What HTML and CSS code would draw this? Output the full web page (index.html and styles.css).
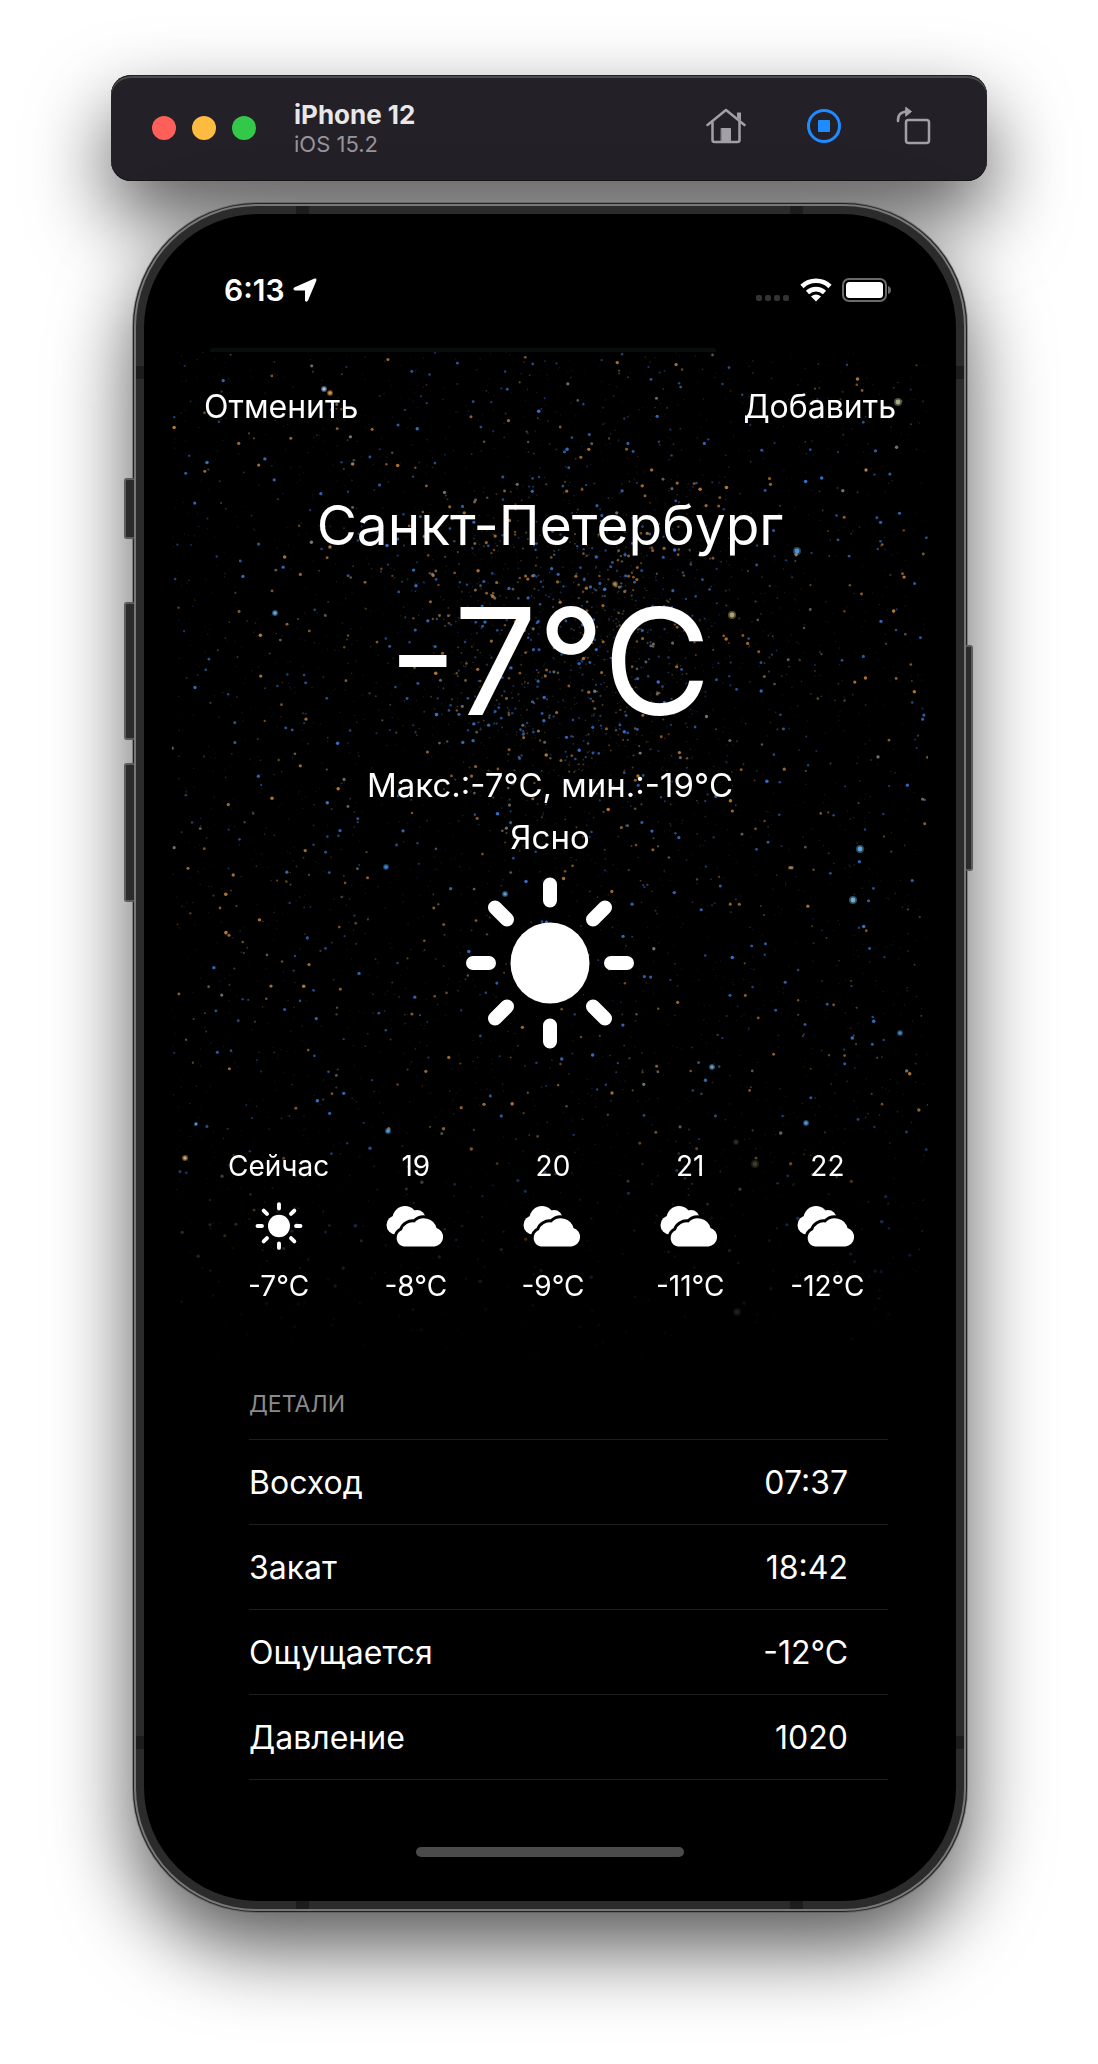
FILE: index.html
```html
<!DOCTYPE html>
<html lang="ru">
<head>
<meta charset="utf-8">
<meta name="viewport" content="width=device-width, initial-scale=1">
<title>Погода — Санкт-Петербург</title>
<link rel="stylesheet" href="styles.css">
</head>
<body>
<svg class="defs" aria-hidden="true">
  <symbol id="sun" viewBox="0 0 168 172">
    <ellipse cx="84" cy="86" rx="39.500" ry="40.500" fill="currentColor"/>
    <g stroke="currentColor" stroke-width="14" stroke-linecap="round">
      <path d="M84 7.500v16M84 148.500v16M7 86h16M145 86h16M29 30.500l12 12M139 30.500l-12 12M29 141.500l12-12M139 141.500l-12-12"/>
    </g>
  </symbol>
  <symbol id="clouds" viewBox="12 14 60 42">
    <g fill="currentColor">
      <circle cx="31" cy="27.500" r="12.500"/>
      <circle cx="22" cy="34" r="9.500"/>
      <circle cx="43" cy="27.500" r="8.500"/>
      <path d="M20 30h20v13H20z"/>
    </g>
    <path d="M30 55.500a8 8.500 0 0 1-2-16.500a11 10.500 0 0 1 12.500-7.500a13 13 0 0 1 22 5.500a9.500 9.500 0 0 1-2 18.500z" fill="currentColor" stroke="#000" stroke-width="6"/>
    <path d="M30 55.500a8 8.500 0 0 1-2-16.500a11 10.500 0 0 1 12.500-7.500a13 13 0 0 1 22 5.500a9.500 9.500 0 0 1-2 18.500z" fill="currentColor"/>
  </symbol>
</svg>

<main class="simulator">
  <header class="toolbar">
    <div class="lights">
      <button class="light light-close" aria-label="Close"></button>
      <button class="light light-minimize" aria-label="Minimize"></button>
      <button class="light light-zoom" aria-label="Zoom"></button>
    </div>
    <div class="device">
      <strong class="device-name">iPhone 12</strong>
      <span class="device-os">iOS 15.2</span>
    </div>
    <div class="actions">
      <button class="action action-home" aria-label="Home">
        <svg width="40" height="36" viewBox="0 0 40 36" fill="none" stroke="currentColor" stroke-width="2.500" stroke-linecap="round" stroke-linejoin="round">
          <path d="M1.500 17L20 2l18.500 15M6.500 14v18q0 2 2 2h23q2 0 2-2V14"/>
          <path d="M31 4.500h4v8l-4-3z" fill="currentColor" stroke="none"/>
          <path d="M15.500 20.500h9V34h-9z" fill="currentColor" stroke-width="1"/>
        </svg>
      </button>
      <button class="action action-active" aria-label="Screenshot">
        <svg width="36" height="36" viewBox="0 0 36 36" fill="none" stroke="currentColor" stroke-width="3">
          <circle cx="18" cy="18" r="15.500"/>
          <rect x="12" y="12" width="12" height="12" rx="1" fill="currentColor" stroke="none"/>
        </svg>
      </button>
      <button class="action" aria-label="Rotate">
        <svg width="36" height="40" viewBox="0 0 36 40" fill="none" stroke="currentColor" stroke-width="2.500" stroke-linecap="round" stroke-linejoin="round">
          <rect x="10" y="14" width="23" height="23" rx="2.500"/>
          <path d="M2 15q-.500-9 9-9.500"/>
          <path d="M10 1.500l5.500 4-5.500 4.500z" fill="currentColor" stroke-width="1"/>
        </svg>
      </button>
    </div>
  </header>

  <div class="phone">
    <i class="side side-mute"></i><i class="side side-up"></i><i class="side side-down"></i><i class="side side-power"></i>
    <i class="band band-tl"></i><i class="band band-tr"></i><i class="band band-bl"></i><i class="band band-br"></i>
    <i class="band band-lt"></i><i class="band band-lb"></i><i class="band band-rt"></i><i class="band band-rb"></i>
    <div class="bezel">
      <div class="screen">
        <div class="status">
          <span class="clock">6:13</span>
          <svg width="24" height="24" viewBox="0 0 24 24" fill="#fff"><path d="M21.500.500Q24 0 23.300 2.700L15 22.500q-1.200 2.200-3 .2V12.500H2q-2.800-1-.8-3z"/></svg>
          <div class="indicators">
            <svg width="34" height="8" viewBox="0 0 34 8" fill="#333"><rect y="1" width="6" height="6" rx="2"/><rect x="9" y="1" width="6" height="6" rx="2"/><rect x="18" y="1" width="6" height="6" rx="2"/><rect x="27" y="1" width="6" height="6" rx="2"/></svg>
            <svg width="32" height="24" viewBox="0 0 32 24" fill="none" stroke="#fff" stroke-width="4.600"><path d="M2 8.500a20 20 0 0 1 28 0"/><path d="M7.500 14.500a12.500 12.500 0 0 1 17 0"/><path d="M16 23.500l-5-5q5-4 10 0z" fill="#fff" stroke="none"/></svg>
            <svg width="50" height="24" viewBox="0 0 50 24"><rect x="1" y="1" width="43" height="22" rx="6" fill="none" stroke="#6a6a6a" stroke-width="2"/><rect x="4" y="4" width="37" height="16" rx="3.500" fill="#fff"/><path d="M46 8q3 1 3 4t-3 4z" fill="#6a6a6a"/></svg>
          </div>
        </div>
        <div class="peek"></div>
        <section class="sheet">
          <canvas class="stars" aria-hidden="true"></canvas>
          <nav class="nav">
            <button class="nav-button">Отменить</button>
            <button class="nav-button">Добавить</button>
          </nav>
          <div class="current">
            <h1 class="city">Санкт-Петербург</h1>
            <p class="temperature">-7°C</p>
            <p class="summary">Макс.:-7°C, мин.:-19°C</p>
            <p class="summary">Ясно</p>
            <svg class="current-icon" role="img" aria-label="Ясно"><use href="#sun"/></svg>
          </div>
          <ol class="hours">
            <li class="hour"><span>Сейчас</span><svg class="hour-icon"><use href="#sun"/></svg><span>-7°C</span></li>
            <li class="hour"><span>19</span><svg class="hour-icon hour-icon-clouds"><use href="#clouds"/></svg><span>-8°C</span></li>
            <li class="hour"><span>20</span><svg class="hour-icon hour-icon-clouds"><use href="#clouds"/></svg><span>-9°C</span></li>
            <li class="hour"><span>21</span><svg class="hour-icon hour-icon-clouds"><use href="#clouds"/></svg><span>-11°C</span></li>
            <li class="hour"><span>22</span><svg class="hour-icon hour-icon-clouds"><use href="#clouds"/></svg><span>-12°C</span></li>
          </ol>
          <div class="details">
            <h2 class="details-title">ДЕТАЛИ</h2>
            <table class="details-table">
              <tr><th scope="row">Восход</th><td>07:37</td></tr>
              <tr><th scope="row">Закат</th><td>18:42</td></tr>
              <tr><th scope="row">Ощущается</th><td>-12°C</td></tr>
              <tr><th scope="row">Давление</th><td>1020</td></tr>
            </table>
          </div>
          <div class="home-bar"></div>
        </section>
      </div>
    </div>
  </div>
</main>
<script src="stars.js"></script>
</body>
</html>
```
FILE: styles.css
```css
* { box-sizing: border-box; }

body {
  margin: 0;
  background: #fff;
  color: #fff;
  font-family: Inter, "Liberation Sans", sans-serif;
}

button {
  padding: 0;
  border: 0;
  background: none;
  color: inherit;
  font: inherit;
  cursor: pointer;
}

.defs { position: absolute; width: 0; height: 0; }

.simulator {
  display: flex;
  flex-direction: column;
  align-items: center;
  gap: 22px;
  padding: 75px 24px 151px;
  overflow: hidden;
}

/* Simulator window bar */
.toolbar {
  display: flex;
  align-items: center;
  gap: 38px;
  width: 100%;
  max-width: 876px;
  min-height: 106px;
  padding: 0 55px 0 41px;
  border-radius: 20px;
  background: #232027;
  box-shadow: inset 0 1px #1d211f, inset 0 3px #4a4c4e, inset 0 -1px #17151a, 0 36px 80px rgba(0, 0, 0, .66);
}

.lights { display: flex; gap: 16px; }
.light { width: 24px; height: 24px; border-radius: 50%; }
.light-close { background: #fe5f58; }
.light-minimize { background: #febb40; }
.light-zoom { background: #34c84a; }

.device { display: flex; flex-direction: column; }
.device-name { font-size: 26px; line-height: 32px; color: #e8e7e9; }
.device-os { font-size: 22px; line-height: 26px; color: #97949b; }

.actions { display: flex; align-items: center; gap: 54px; margin-left: auto; padding-bottom: 4px; }
.action { display: flex; color: #a29fa6; }
.action-home { margin-right: 6px; }
.action-active { color: #1e8bff; }

/* Phone body */
.phone {
  position: relative;
  width: 100%;
  max-width: 834px;
  margin-left: 2px;
  padding: 11px;
  border-radius: 124px;
  background: #2b2b2b;
  box-shadow: inset 0 0 0 1px #222, inset 0 0 0 3px #777, 0 0 0 1px rgba(80, 80, 80, .5), 0 36px 80px rgba(0, 0, 0, .66);
}

.bezel {
  padding: 0 28px;
  border-radius: 114px;
  background: #000;
}

.side {
  position: absolute;
  width: 10px;
  border: 2px solid #5c5c5c;
  border-right: 0;
  border-radius: 3px 0 0 3px;
  background: #2b2b2b;
}
.side-mute { left: -9px; top: 275px; height: 61px; }
.side-up { left: -9px; top: 399px; height: 138px; }
.side-down { left: -9px; top: 560px; height: 139px; }
.side-power {
  right: -6px;
  top: 442px;
  width: 7px;
  height: 226px;
  border: 2px solid #5c5c5c;
  border-left: 0;
  border-radius: 0 3px 3px 0;
}

.band { position: absolute; background: #1c1c1c; }
.band-tl, .band-tr, .band-bl, .band-br { width: 13px; height: 8px; }
.band-lt, .band-lb, .band-rt, .band-rb { width: 8px; height: 13px; }
.band-tl, .band-tr { top: 3px; }
.band-bl, .band-br { bottom: 3px; }
.band-tl, .band-bl { left: 163px; }
.band-tr, .band-br { right: 164px; }
.band-lt, .band-lb { left: 3px; }
.band-rt, .band-rb { right: 3px; }
.band-lt, .band-rt { top: 163px; }
.band-lb, .band-rb { bottom: 163px; }

/* Status bar */
.status {
  display: flex;
  align-items: center;
  gap: 8px;
  padding: 56px 36px 38px 52px;
}
.clock { font-size: 30px; line-height: 40px; font-weight: 600; }
.indicators { display: flex; align-items: flex-end; gap: 10px; margin-left: auto; }

.peek {
  width: 67%;
  height: 4px;
  margin-left: 5%;
  border-radius: 8px 8px 0 0;
  background: #0a0e0a;
}

/* Weather sheet */
.sheet {
  position: relative;
  display: flex;
  flex-direction: column;
  padding: 35px 0 44px;
}
.sheet > * { position: relative; }
.sheet > .stars {
  position: absolute;
  top: 0;
  left: 0;
  width: 100%;
  height: 1020px;
}

.nav { display: flex; justify-content: space-between; padding: 0 32px; }
.nav-button { font-size: 32px; line-height: 40px; }

.current {
  display: flex;
  flex-direction: column;
  align-items: center;
  padding-top: 64px;
}
.city { margin: 0; font-size: 55px; line-height: 68px; font-weight: 400; }
.temperature { margin: 23px 0; font-size: 148px; line-height: 160px; }
.summary { margin: 0; font-size: 33px; line-height: 40px; }
.summary + .summary { margin-top: 12px; }
.current-icon { width: 168px; height: 172px; margin-top: 20px; }

.hours {
  display: grid;
  grid-template-columns: repeat(5, 1fr);
  margin: 99px 32px 85px 38px;
  padding: 0;
  list-style: none;
}
.hour {
  display: flex;
  flex-direction: column;
  align-items: center;
  gap: 18px;
  font-size: 28px;
  line-height: 36px;
}
.hour-icon { width: 48px; height: 48px; }
.hour-icon-clouds { width: 60px; }

.details { margin: 0 40px 0 77px; }
.details-title {
  margin: 0 0 20px;
  font-size: 23px;
  line-height: 30px;
  font-weight: 400;
  color: #8b8b8b;
}
.details-table { width: 100%; border-collapse: collapse; font-size: 32px; line-height: 40px; }
.details-table tr { border-top: 1px solid #1e1e1e; border-bottom: 1px solid #1e1e1e; }
.details-table th { padding: 23px 0 21px; font-weight: 400; text-align: left; }
.details-table td { padding: 23px 40px 21px 0; text-align: right; }

.home-bar {
  width: 268px;
  max-width: 40%;
  height: 10px;
  margin: 67px auto 0;
  border-radius: 5px;
  background: #4b4b4b;
}
```
FILE: stars.js
```js
// Star field behind the forecast: seeded scatter, a dense cluster and a few bright stars.
(function () {
  var canvas = document.querySelector('.stars');
  var ctx = canvas.getContext('2d');
  var seed = 20211;

  function random() {
    seed = (seed * 1664525 + 1013904223) % 4294967296;
    return seed / 4294967296;
  }
  function bell() {
    return (random() + random() + random() + random() - 2) / 2;
  }
  function dot(x, y, r, color, alpha) {
    ctx.globalAlpha = alpha;
    ctx.fillStyle = color;
    ctx.beginPath();
    ctx.arc(x, y, r, 0, Math.PI * 2);
    ctx.fill();
  }
  function tint() {
    return random() < 0.5 ? '#3f83e8' : random() < 0.75 ? '#d08a3c' : '#8d9188';
  }

  // x, y, radius, colour
  var bright = [
    [726, 50, 4, '#a9ab84'], [152, 37, 3, '#a9bce0'], [158, 41, 3, '#d69a3c'],
    [103, 261, 3, '#5fa8ec'], [560, 263, 4, '#b3a368'], [625, 199, 4, '#4f94d0'],
    [688, 497, 4, '#5fa4d4'], [681, 548, 4, '#6fb0d8'], [333, 542, 3, '#5c9bd0'],
    [214, 515, 3, '#3b84d8'], [540, 715, 3, '#5fa0d8'], [13, 806, 3, '#c9a45c'],
    [583, 812, 4, '#3c3c2a'], [564, 790, 3, '#33301f'], [443, 232, 3, '#a58a4c'],
    [728, 681, 3, '#3c8ac8'], [634, 771, 3, '#4b9ae0'], [24, 772, 2, '#4a9ae8'],
    [216, 779, 3, '#4b9ae0'], [565, 960, 4, '#1c201c'], [694, 118, 2, '#b58f5a']
  ];

  function draw() {
    var width = canvas.clientWidth;
    var height = canvas.clientHeight;
    var i;
    canvas.width = width;
    canvas.height = height;
    seed = 20211;
    for (i = 0; i < 4200; i++) {
      var level = Math.pow(random(), 4);
      dot(random() * width, random() * height, 0.6 + level * 1.2, tint(), 0.16 + level * 0.7);
    }
    for (i = 0; i < 1100; i++) {
      var glow = Math.pow(random(), 2);
      dot(width * 0.53 + bell() * 300, 285 + bell() * 330, 0.7 + glow, tint(), 0.2 + glow * 0.6);
    }
    // Fade the lower part of the field to black
    var fade = ctx.createLinearGradient(0, 740, 0, height);
    fade.addColorStop(0, 'rgba(0,0,0,0)');
    fade.addColorStop(0.35, 'rgba(0,0,0,.5)');
    fade.addColorStop(0.8, 'rgba(0,0,0,.92)');
    fade.addColorStop(1, '#000');
    ctx.globalAlpha = 1;
    ctx.fillStyle = fade;
    ctx.fillRect(0, 0, width, height);
    bright.forEach(function (s) {
      var x = s[0] / 756 * width;
      dot(x, s[1], s[2], s[3], 0.45);
      dot(x, s[1], s[2] * 0.6, s[3], 1);
    });
  }

  draw();
  window.addEventListener('resize', draw);
})();
```
